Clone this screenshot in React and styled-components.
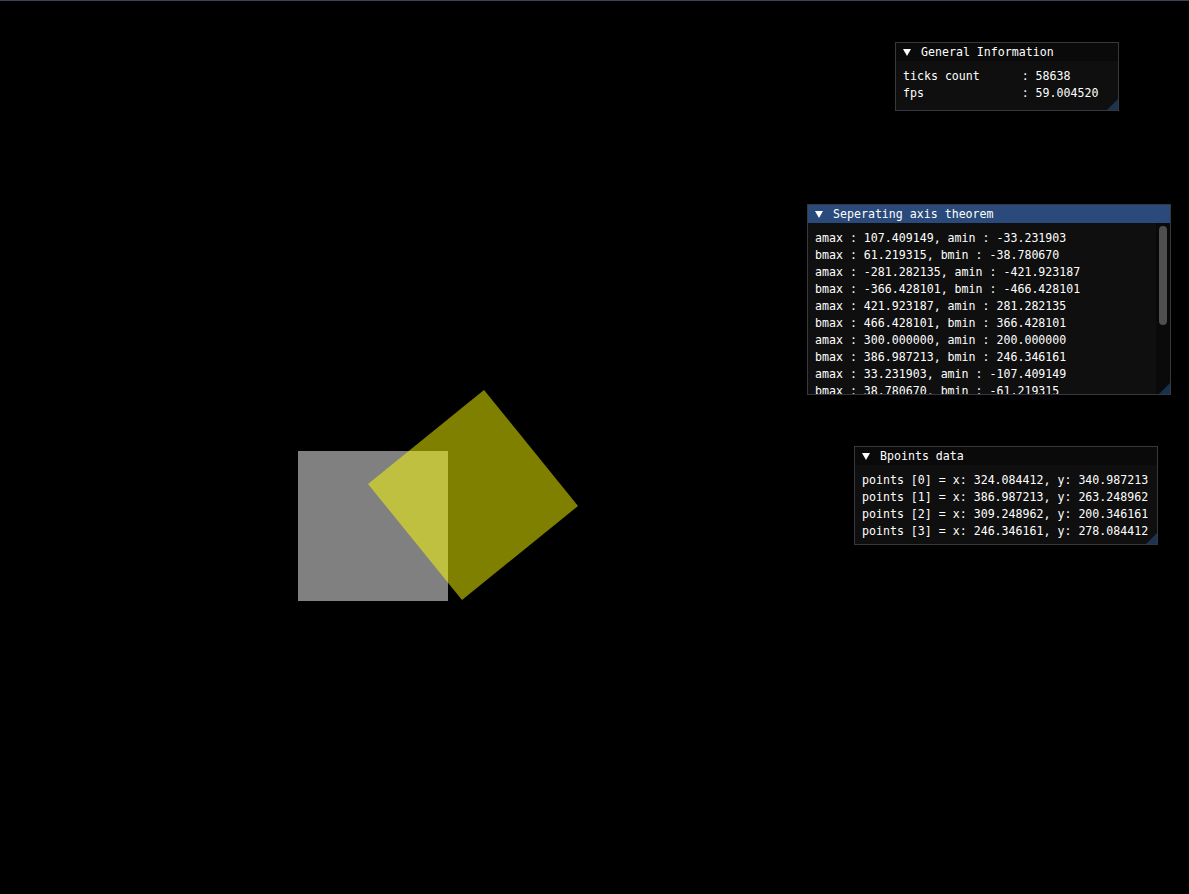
import React from "react";
import styled, { createGlobalStyle } from "styled-components";

const GlobalStyle = createGlobalStyle`
  html, body {
    margin: 0;
    padding: 0;
    background: #000;
  }
  body {
    font-family: "DejaVu Sans Mono", "Liberation Mono", monospace;
  }
`;

const generalLines = [
  "ticks count      : 58638",
  "fps              : 59.004520",
];

const satLines = [
  "amax : 107.409149, amin : -33.231903",
  "bmax : 61.219315, bmin : -38.780670",
  "amax : -281.282135, amin : -421.923187",
  "bmax : -366.428101, bmin : -466.428101",
  "amax : 421.923187, amin : 281.282135",
  "bmax : 466.428101, bmin : 366.428101",
  "amax : 300.000000, amin : 200.000000",
  "bmax : 386.987213, bmin : 246.346161",
  "amax : 33.231903, amin : -107.409149",
  "bmax : 38.780670, bmin : -61.219315",
];

const bpointLines = [
  "points [0] = x: 324.084412, y: 340.987213",
  "points [1] = x: 386.987213, y: 263.248962",
  "points [2] = x: 309.248962, y: 200.346161",
  "points [3] = x: 246.346161, y: 278.084412",
];

const Window = ({ title, lines, x, y, w, h, active, scroll }) => (
  <Panel style={{ left: x, top: y, width: w, height: h }}>
    <TitleBar $active={active}>
      <Arrow />
      <span>{title}</span>
    </TitleBar>
    <Body>
      <Lines>
        {lines.map((l, i) => (
          <Line key={i}>{l}</Line>
        ))}
      </Lines>
      {scroll && (
        <ScrollTrack>
          <ScrollGrab />
        </ScrollTrack>
      )}
    </Body>
  </Panel>
);

const App = () => {
  return (
    <>
      <GlobalStyle />
      <Canvas>
        <TopLine />
        <Scene width="1189" height="894">
          <rect x="298" y="451" width="150" height="150" fill="#808080" />
          <polygon
            points="368,484 484,390 578,506 462,600"
            fill="rgba(255,255,0,0.5)"
          />
        </Scene>
        <Window
          title="General Information"
          lines={generalLines}
          x={895}
          y={42}
          w={224}
          h={69}
        />
        <Window
          title="Seperating axis theorem"
          lines={satLines}
          x={807}
          y={204}
          w={364}
          h={191}
          active
          scroll
        />
        <Window
          title="Bpoints data"
          lines={bpointLines}
          x={854}
          y={446}
          w={304}
          h={99}
        />
      </Canvas>
    </>
  );
};

const Canvas = styled.div`
  position: relative;
  width: 1189px;
  height: 894px;
  background: #000;
  overflow: hidden;
`;

const TopLine = styled.div`
  height: 1px;
  background: #3b4358;
`;

const Scene = styled.svg`
  position: absolute;
  left: 0;
  top: 0;
  display: block;
`;

const Panel = styled.div`
  position: absolute;
  box-sizing: border-box;
  display: flex;
  flex-direction: column;
  background: #0f0f0f;
  border: 1px solid #373740;
  color: #fff;
  font-family: "DejaVu Sans Mono", "Liberation Mono", monospace;
  font-size: 11.6px;
  overflow: hidden;
  &::after {
    content: "";
    position: absolute;
    right: 0;
    bottom: 0;
    width: 11px;
    height: 11px;
    background: rgba(66, 150, 250, 0.28);
    clip-path: polygon(100% 0, 100% 100%, 0 100%);
  }
`;

const TitleBar = styled.div`
  flex: none;
  height: 18px;
  display: flex;
  align-items: center;
  gap: 10px;
  padding-left: 7px;
  background: ${(p) => (p.$active ? "#294a7a" : "#0a0a0a")};
  white-space: pre;
`;

const Arrow = styled.div`
  width: 0;
  height: 0;
  border-left: 4px solid transparent;
  border-right: 4px solid transparent;
  border-top: 7px solid #fff;
`;

const Body = styled.div`
  flex: 1;
  min-height: 0;
  display: flex;
`;

const Lines = styled.div`
  flex: 1;
  padding: 7px 0 0 7px;
  overflow: hidden;
`;

const Line = styled.div`
  height: 17px;
  line-height: 17px;
  white-space: pre;
`;

const ScrollTrack = styled.div`
  flex: none;
  width: 14px;
  background: #0a0a0a;
  padding: 3px 3px 0 3px;
  box-sizing: border-box;
`;

const ScrollGrab = styled.div`
  width: 8px;
  height: 99px;
  border-radius: 4px;
  background: #4f4f4f;
`;

export default App;
